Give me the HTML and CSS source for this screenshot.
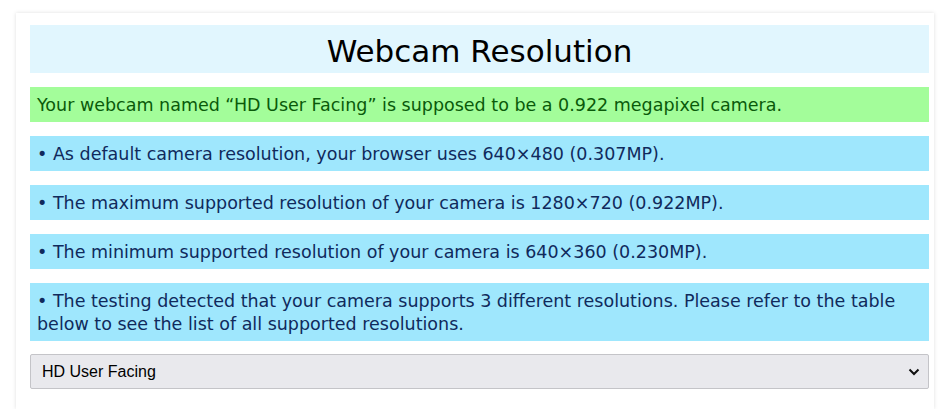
FILE: index.html
```html
<!DOCTYPE html>
<html>
<head>
<meta charset="utf-8">
<link rel="stylesheet" href="styles.css">
</head>
<body>
<div class="card">
  <h1 class="title">Webcam Resolution</h1>
  <div class="msg msg-green">Your webcam named “HD User Facing” is supposed to be a 0.922 megapixel camera.</div>
  <div class="msg msg-blue">• As default camera resolution, your browser uses 640×480 (0.307MP).</div>
  <div class="msg msg-blue">• The maximum supported resolution of your camera is 1280×720 (0.922MP).</div>
  <div class="msg msg-blue">• The minimum supported resolution of your camera is 640×360 (0.230MP).</div>
  <div class="msg msg-blue">• The testing detected that your camera supports 3 different resolutions. Please refer to the table below to see the list of all supported resolutions.</div>
  <div class="select">
    <span class="select-text">HD User Facing</span>
    <svg class="chev" width="12" height="8" viewBox="0 0 12 8"><path d="M1.5 1.5 L6 6 L10.5 1.5" fill="none" stroke="#111" stroke-width="2"/></svg>
  </div>
</div>
</body>
</html>
```
FILE: styles.css
```css
html, body {
  margin: 0;
  padding: 0;
  background: #fff;
  overflow: hidden;
}
body {
  padding: 13px 0 0 16px;
  font-family: "DejaVu Sans", Verdana, sans-serif;
}
.card {
  width: 899px;
  background: #fff;
  box-shadow: 0 0 4px rgba(0,0,0,0.13);
  padding: 12px 5px 20px 14px;
  display: flex;
  flex-direction: column;
  gap: 13px;
}
.title {
  margin: 0;
  background: #e1f6fe;
  height: 48px;
  line-height: 52px;
  text-align: center;
  font-family: "DejaVu Sans", Verdana, sans-serif;
  font-weight: normal;
  font-size: 31px;
  color: #000;
}
.msg {
  padding: 7px 7px 5px;
  font-size: 17.5px;
  line-height: 23px;
  margin-top: 1px;
}
.msg-green {
  background: #a3fd9a;
  color: #0a5a0a;
}
.msg-blue {
  background: #9fe7fd;
  color: #102a5c;
}
.select {
  margin-top: 0;
  height: 33px;
  border: 1px solid #c4c4c8;
  border-radius: 2px;
  background: #e9e9ed;
  display: flex;
  align-items: center;
  justify-content: space-between;
  padding: 0 8px 0 11px;
  font-family: "Liberation Sans", Arial, sans-serif;
  font-size: 16px;
  color: #000;
}
```
